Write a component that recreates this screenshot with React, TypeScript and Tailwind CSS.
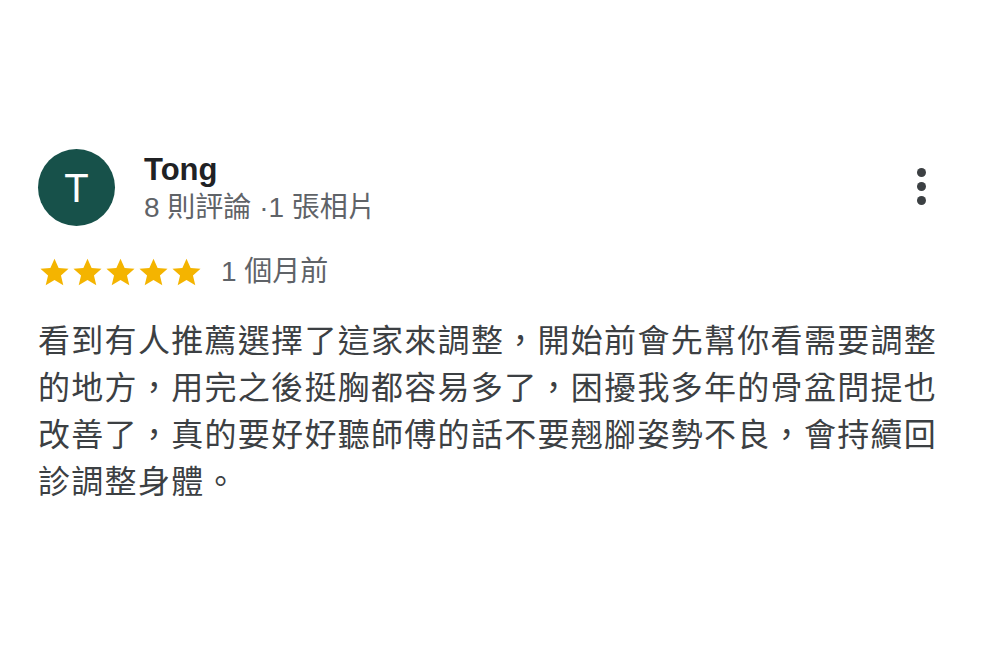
const font = { fontFamily: '"Liberation Sans", "Noto Sans CJK TC", sans-serif' };

function Star() {
  return (
    <svg viewBox="0 0 24 24" className="w-[33px] h-[33px]" fill="#f4b400">
      <path d="M12 2l3 6.7 7.2.6-5.5 4.8 1.7 7.1L12 17.4l-6.4 3.8 1.7-7.1L1.8 9.3 9 8.7z" />
    </svg>
  );
}

export default function App() {
  return (
    <div className="w-[988px] h-[655px] bg-white" style={font}>
      <div className="pt-[149px] pl-[38px] pr-[58px]">
        {/* Header */}
        <div className="flex items-start">
          <div className="w-[77px] h-[77px] rounded-full bg-[#17514a] flex items-center justify-center text-white text-[40px] leading-none">
            T
          </div>
          <div className="ml-[29px] flex-1 pt-[2px]">
            <div className="text-[31px] font-bold text-[#202124] leading-[38px]">Tong</div>
            <div className="text-[28px] text-[#5f6368] leading-[32px] mt-[3px]">8 則評論 ·1 張相片</div>
          </div>
          <div className="flex flex-col gap-[5px] pt-[19px] pr-[4px]">
            <span className="w-[9px] h-[9px] rounded-full bg-[#3c4043]" />
            <span className="w-[9px] h-[9px] rounded-full bg-[#3c4043]" />
            <span className="w-[9px] h-[9px] rounded-full bg-[#3c4043]" />
          </div>
        </div>

        {/* Rating */}
        <div className="flex items-center mt-[25px]">
          <div className="flex">
            <Star />
            <Star />
            <Star />
            <Star />
            <Star />
          </div>
          <span className="ml-[18px] text-[28px] text-[#5f6368]">1 個月前</span>
        </div>

        {/* Body */}
        <p className="mt-[25px] text-[32px] tracking-[1.3px] leading-[47px] text-[#3c4043] w-[920px]">
          看到有人推薦選擇了這家來調整，開始前會先幫你看需要調整的地方，用完之後挺胸都容易多了，困擾我多年的骨盆問提也改善了，真的要好好聽師傅的話不要翹腳姿勢不良，會持續回診調整身體。
        </p>
      </div>
    </div>
  );
}
